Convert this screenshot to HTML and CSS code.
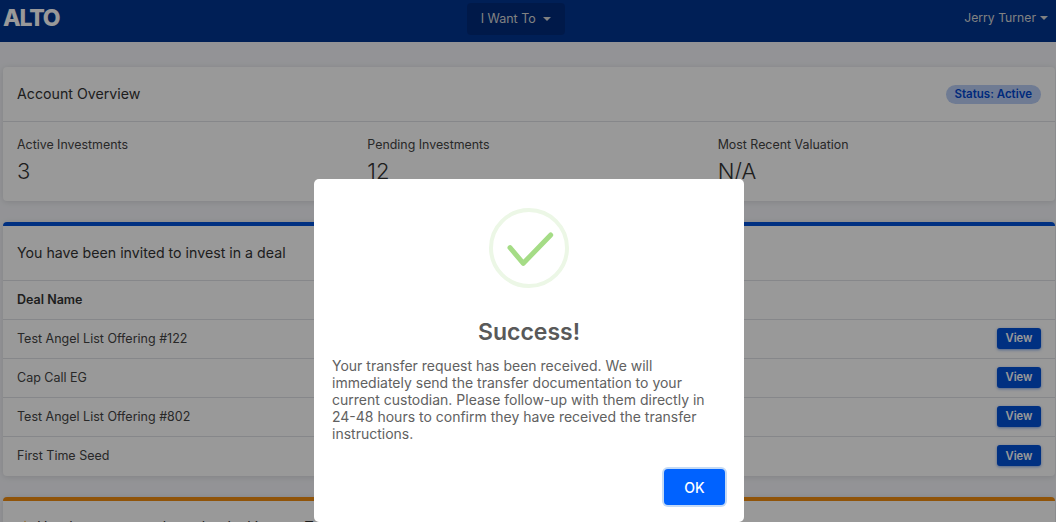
FILE: index.html
```html
<!DOCTYPE html>
<html lang="en">
<head>
  <meta charset="UTF-8" />
  <title>Alto Dashboard</title>
  <link rel="stylesheet" href="styles.css">
</head>
<body>

  <nav class="navbar">
    <div class="logo">ALTO</div>
    <button class="want-btn">I Want To <span class="caret"></span></button>
    <div class="user">Jerry Turner<span class="caret"></span></div>
  </nav>

  <main class="content">
    <!-- Account Overview -->
    <section class="card overview">
      <div class="card-head">
        <h2>Account Overview</h2>
        <span class="status">Status: Active</span>
      </div>
      <div class="stats">
        <div class="stat"><div class="stat-label">Active Investments</div><div class="stat-value">3</div></div>
        <div class="stat"><div class="stat-label">Pending Investments</div><div class="stat-value">12</div></div>
        <div class="stat"><div class="stat-label">Most Recent Valuation</div><div class="stat-value">N/A</div></div>
      </div>
    </section>

    <!-- Deals -->
    <section class="card card-blue">
      <div class="card-head"><h2>You have been invited to invest in a deal</h2></div>
      <div class="row row-title">Deal Name</div>
      <div class="row">Test Angel List Offering #122 <button class="view-btn">View</button></div>
      <div class="row">Cap Call EG <button class="view-btn">View</button></div>
      <div class="row">Test Angel List Offering #802 <button class="view-btn">View</button></div>
      <div class="row">First Time Seed <button class="view-btn">View</button></div>
    </section>

    <section class="card card-orange">
      <div class="card-head">
        <h2>
          <svg class="warn" viewBox="0 0 16 15" width="16" height="15"><path d="M8 0.5 L15.5 14.5 H0.5 Z" fill="#f0a020"/></svg>
          Header message about the deal in your Type of
        </h2>
      </div>
    </section>
  </main>

  <div class="overlay"></div>

  <!-- Success modal -->
  <div class="modal">
    <svg class="check" viewBox="0 0 80 80" width="80" height="80">
      <circle cx="40" cy="40" r="38" fill="none" stroke="#ecf7e6" stroke-width="4"/>
      <path d="M21 39.7 L34.3 55.3 L61.7 27" fill="none" stroke="#a5dc86" stroke-width="5" stroke-linecap="round" stroke-linejoin="round"/>
    </svg>
    <h1>Success!</h1>
    <p>Your transfer request has been received. We will immediately send the transfer documentation to your current custodian. Please follow-up with them directly in 24-48 hours to confirm they have received the transfer instructions.</p>
    <div class="modal-foot"><button class="ok-btn">OK</button></div>
  </div>

</body>
</html>
```

FILE: styles.css
```css
* {
  box-sizing: border-box;
  padding: 0;
  margin: 0;
  font-family: Inter, 'Noto Sans', sans-serif;
}

html, body {
  height: 522px;
  overflow: hidden;
}

body {
  background: #f5f6fa;
  color: #333;
  font-size: 13px;
}

.navbar {
  height: 42px;
  background: #003490;
  color: #d8d8d8;
  display: flex;
  align-items: flex-start;
  justify-content: space-between;
  padding: 0 8px 0 3px;
}

.logo {
  font-size: 23px;
  font-weight: 800;
  line-height: 37px;
  width: 160px;
  letter-spacing: -1.2px;
  color: #fff;
}

.want-btn {
  background: #002b7b;
  color: #d8d8d8;
  border: none;
  border-radius: 4px;
  width: 98px;
  height: 32px;
  margin-top: 3px;
  padding-bottom: 2px;
  font-size: 12.5px;
}

.user {
  width: 179px;
  text-align: right;
  line-height: 36px;
  font-size: 12.2px;
}

.caret {
  display: inline-block;
  margin-left: 4px;
  vertical-align: 2px;
  border-top: 4px solid #d8d8d8;
  border-left: 4px solid transparent;
  border-right: 4px solid transparent;
}

.content {
  padding: 25px 1px 0 3px;
}

.card {
  background: #fff;
  border-radius: 4px;
  box-shadow: 0 1px 6px rgba(0, 0, 0, 0.12);
  margin-bottom: 21px;
}

.card-blue {
  border-top: 4px solid #0050d8;
}

.card-orange {
  border-top: 4px solid #f08c10;
  margin-bottom: 0;
}

.card-head {
  height: 55px;
  padding: 0 14px;
  display: flex;
  align-items: center;
  justify-content: space-between;
  border-bottom: 1px solid #dfe1e6;
}

.card-head h2 {
  font-size: 14.2px;
  font-weight: 400;
  color: #333;
  margin-bottom: 2px;
}

.card-orange .card-head h2 {
  margin-bottom: 4px;
}

.warn {
  vertical-align: -3px;
}

.status {
  background: #b9cdf5;
  color: #0047d0;
  font-size: 11.5px;
  font-weight: 600;
  line-height: 19px;
  border-radius: 10px;
  padding: 0 9px;
  margin-top: 1px;
}

.stats {
  display: grid;
  grid-template-columns: repeat(3, 350.33px);
  padding: 15px 14px 0;
  height: 79px;
}

.stat-label {
  font-size: 12.4px;
  color: #444;
}

.stat-value {
  font-size: 22px;
  font-weight: 300;
  margin-top: 6px;
}

.row {
  height: 39px;
  padding: 0 14px 2px;
  display: flex;
  align-items: center;
  justify-content: space-between;
  border-bottom: 1px solid #dfe1e6;
  font-size: 12.5px;
  color: #444;
}

.row:last-child {
  border-bottom: none;
}

.row-title {
  font-weight: 600;
  color: #333;
}

.view-btn {
  background: #0050d8;
  color: #fff;
  border: none;
  border-radius: 3px;
  width: 44px;
  height: 21px;
  font-size: 11.2px;
  font-weight: 600;
  box-shadow: 0 1px 3px rgba(0, 80, 216, 0.5);
}

.overlay {
  position: fixed;
  inset: 0;
  background: rgba(0, 0, 0, 0.4);
}

.modal {
  position: fixed;
  left: 314px;
  top: 179px;
  width: 430px;
  height: 343px;
  background: #fff;
  border-radius: 5px;
  padding: 29px 18px 0;
  text-align: center;
}

.check {
  display: block;
  margin: 0 auto;
}

.modal h1 {
  font-size: 23px;
  font-weight: 600;
  color: #595959;
  margin-top: 29px;
  line-height: 30px;
}

.modal p {
  text-align: left;
  font-size: 14px;
  line-height: 17px;
  color: #616161;
  margin-top: 10px;
}

.modal-foot {
  display: flex;
  justify-content: flex-end;
  margin-top: 27px;
}

.ok-btn {
  width: 61px;
  height: 36px;
  background: #0062ff;
  color: #fff;
  border: none;
  border-radius: 4px;
  font-size: 14px;
  font-weight: 500;
  box-shadow: 0 0 0 2px #c4daf5;
  margin-right: 1px;
}
```
